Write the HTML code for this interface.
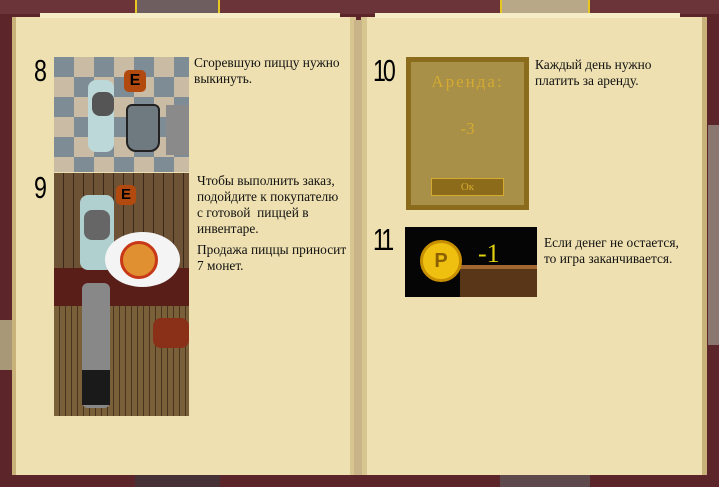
<!DOCTYPE html>
<html><head><meta charset="utf-8"><style>
*{margin:0;padding:0;box-sizing:border-box}
body{width:719px;height:487px;overflow:hidden;background:#5c2529;position:relative;font-family:"Liberation Serif",serif;}
.abs{position:absolute}
.camo{position:absolute;background:#a99a7a}
.page{position:absolute;background:#eee0b0;}
.txt{position:absolute;font-size:13.4px;line-height:16px;color:#111;white-space:nowrap}
.num{position:absolute;font-family:"Liberation Sans",sans-serif;font-size:31px;color:#000;letter-spacing:-4px;transform:scaleX(0.75);transform-origin:left top}
</style></head><body>
<div class="abs" style="left:0;top:0;width:719px;height:14px;background:#6a3438"></div>
<div class="camo" style="left:135px;top:0;width:85px;height:13px;background:#6e5e60"></div>
<div class="camo" style="left:500px;top:0;width:90px;height:13px;background:#b8a888"></div>
<div class="camo" style="left:708px;top:125px;width:11px;height:220px;background:#8a7870"></div>
<div class="camo" style="left:0;top:320px;width:12px;height:50px;background:#a89878"></div>
<div class="camo" style="left:135px;top:475px;width:85px;height:12px;background:#463236"></div>
<div class="camo" style="left:500px;top:475px;width:90px;height:12px;background:#5e4a4c"></div>
<div class="abs" style="left:135px;top:0;width:2px;height:13px;background:#e8c820"></div>
<div class="abs" style="left:218px;top:0;width:2px;height:13px;background:#e8c820"></div>
<div class="abs" style="left:500px;top:0;width:2px;height:13px;background:#e8c820"></div>
<div class="abs" style="left:588px;top:0;width:2px;height:13px;background:#e8c820"></div>
<div class="page" style="left:12px;top:17px;width:344px;height:458px;border-left:4px solid #c9b27a;border-right:6px solid #d8c690"></div>
<div class="abs" style="left:40px;top:13px;width:300px;height:5px;background:#f6ecc6"></div>
<div class="page" style="left:361px;top:17px;width:346px;height:458px;border-left:6px solid #d8c690;border-right:5px solid #c9b27a"></div>
<div class="abs" style="left:375px;top:13px;width:305px;height:5px;background:#f6ecc6"></div>
<div class="abs" style="left:354px;top:20px;width:8px;height:455px;background:#c8b488"></div>

<div class="num" style="left:34px;top:53px">8</div>
<div class="abs" style="left:54px;top:57px;width:135px;height:115px;background:
repeating-conic-gradient(#c9bba4 0 25%,#7e8c95 0 50%) 0 0/40px 40px"></div>
<div class="abs" style="left:166px;top:105px;width:23px;height:50px;background:#8a8a8a"></div>
<div class="abs" style="left:126px;top:104px;width:34px;height:48px;background:#6f7a80;border-radius:6px 6px 10px 10px;border:2px solid #222"></div>
<div class="abs" style="left:88px;top:80px;width:26px;height:72px;background:#bcd8d8;border-radius:8px"></div>
<div class="abs" style="left:92px;top:92px;width:22px;height:24px;background:#555;border-radius:8px"></div>
<div class="abs" style="left:124px;top:70px;width:22px;height:22px;background:#b24a10;border-radius:5px;color:#000;font:bold 16px 'Liberation Sans';text-align:center;line-height:22px">E</div>
<div class="txt" style="left:194px;top:55px">Сгоревшую пиццу нужно<br>выкинуть.</div>

<div class="num" style="left:34px;top:170px">9</div>
<div class="abs" style="left:54px;top:173px;width:135px;height:243px;background:repeating-linear-gradient(90deg,#7a6038 0 5px,#4a3420 5px 6px)"></div>
<div class="abs" style="left:54px;top:173px;width:135px;height:100px;background:repeating-linear-gradient(90deg,#6e5236 0 9px,#3a2818 9px 10px)"></div>
<div class="abs" style="left:54px;top:268px;width:135px;height:38px;background:#5a1e18"></div>
<div class="abs" style="left:153px;top:318px;width:36px;height:30px;background:#8a3018;border-radius:8px"></div>
<div class="abs" style="left:80px;top:195px;width:34px;height:75px;background:#b0d0d0;border-radius:8px"></div>
<div class="abs" style="left:84px;top:210px;width:26px;height:30px;background:#666;border-radius:8px"></div>
<div class="abs" style="left:105px;top:232px;width:75px;height:55px;background:#f4f4f4;border-radius:50%"></div>
<div class="abs" style="left:120px;top:241px;width:38px;height:38px;background:#e09030;border-radius:50%;border:3px solid #c83818"></div>
<div class="abs" style="left:116px;top:185px;width:20px;height:20px;background:#b24a10;border-radius:5px;color:#000;font:bold 15px 'Liberation Sans';text-align:center;line-height:20px">E</div>
<div class="abs" style="left:82px;top:283px;width:28px;height:125px;background:#888;border-radius:6px"></div>
<div class="abs" style="left:82px;top:370px;width:28px;height:35px;background:#1a1a1a"></div>
<div class="txt" style="left:197px;top:173px">Чтобы выполнить заказ,<br>подойдите к покупателю<br>с готовой&nbsp; пиццей в<br>инвентаре.</div>
<div class="txt" style="left:197px;top:242px">Продажа пиццы приносит<br>7 монет.</div>

<div class="num" style="left:373px;top:53px">10</div>
<div class="abs" style="left:406px;top:57px;width:123px;height:153px;background:#a89048;border:5px solid #8a6c1c"></div>
<div class="abs" style="left:406px;top:72px;width:123px;text-align:center;font:17px 'Liberation Serif',serif;color:#d4aa30;letter-spacing:2px">Аренда:</div>
<div class="abs" style="left:406px;top:119px;width:123px;text-align:center;font:17px 'Liberation Serif',serif;color:#d4aa30">-3</div>
<div class="abs" style="left:431px;top:178px;width:73px;height:18px;background:#8c6c1a;border:1px solid #d4aa30;text-align:center;font:11px 'Liberation Serif',serif;color:#d4aa30;line-height:16px">Ок</div>
<div class="txt" style="left:535px;top:57px">Каждый день нужно<br>платить за аренду.</div>

<div class="num" style="left:373px;top:222px">11</div>
<div class="abs" style="left:405px;top:227px;width:132px;height:70px;background:#050505"></div>
<div class="abs" style="left:460px;top:265px;width:77px;height:32px;background:#5a3618;border-top:4px solid #a06830"></div>
<div class="abs" style="left:420px;top:240px;width:42px;height:42px;background:#f0c010;border-radius:50%;border:3px solid #c89000;color:#8a6000;font:bold 20px 'Liberation Sans';text-align:center;line-height:36px">P</div>
<div class="abs" style="left:478px;top:240px;font:26px 'Liberation Serif',serif;color:#e0d010;line-height:28px">-1</div>
<div class="txt" style="left:544px;top:235px">Если денег не остается,<br>то игра заканчивается.</div>
</body></html>
